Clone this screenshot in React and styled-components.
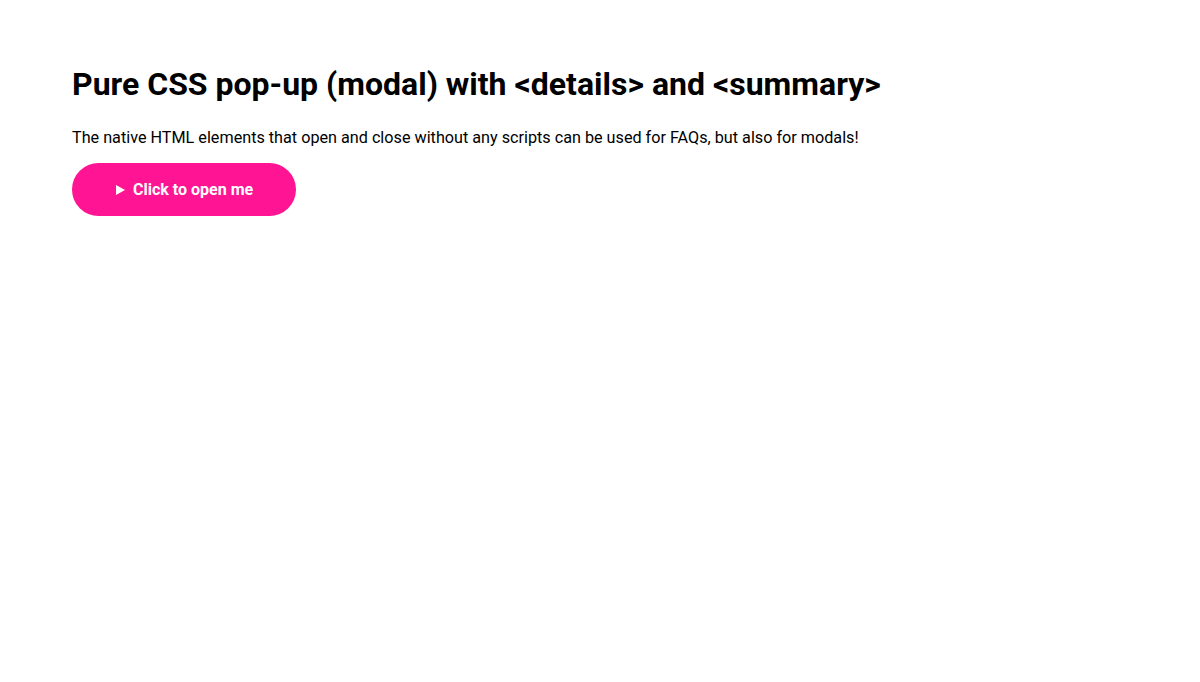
import styled, { createGlobalStyle } from "styled-components";

const GlobalStyle = createGlobalStyle`
  body {
    margin: 0;
    background: #fff;
    color: #000;
    font-family: Roboto, "Liberation Sans", sans-serif;
  }
`;

const Page = styled.main`
  padding: 65px 72px;
`;

const Title = styled.h1`
  font-size: 32px;
  font-weight: 700;
  line-height: 1.2;
  margin: 0 0 23px;
`;

const Lead = styled.p`
  font-size: 16.2px;
  line-height: 1.5;
  margin: 0 0 12px;
`;

const Details = styled.details`
  display: inline-block;
`;

const Summary = styled.summary`
  display: flex;
  align-items: center;
  gap: 8px;
  height: 53px;
  padding: 0 43px 0 44px;
  box-sizing: border-box;
  border-radius: 27px;
  background: #ff1493;
  color: #fff;
  font-size: 16px;
  font-weight: 700;
  cursor: pointer;
  list-style: none;

  &::-webkit-details-marker {
    display: none;
  }
`;

const Arrow = styled.span`
  width: 0;
  height: 0;
  border-top: 5px solid transparent;
  border-bottom: 5px solid transparent;
  border-left: 9px solid #fff;
  margin-top: 1px;
`;

const App = () => {
  return (
    <Page>
      <GlobalStyle />
      <Title>Pure CSS pop-up (modal) with &lt;details&gt; and &lt;summary&gt;</Title>
      <Lead>
        The native HTML elements that open and close without any scripts can be used for FAQs, but also for modals!
      </Lead>
      <Details>
        <Summary>
          <Arrow />
          Click to open me
        </Summary>
      </Details>
    </Page>
  );
};

export default App;
